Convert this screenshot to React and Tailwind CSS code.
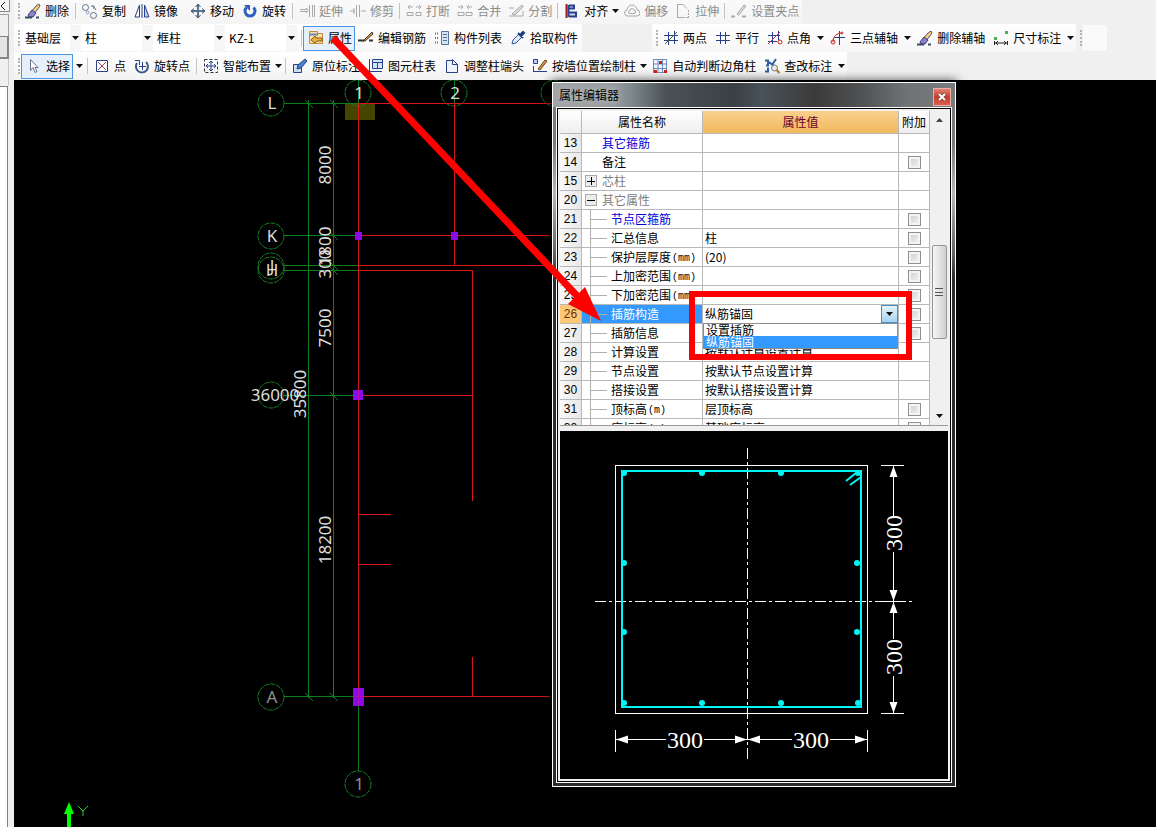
import React, { useState } from 'react';

/* ---------- Icons ---------- */

const NAVY = '#27408b';
const GRAY = '#a9a9a9';

const icons = {
    erase: (
        <>
            <path d="M6 9l5-6 3-2 1 2-6 8z" fill="#f3d36b" stroke="#5b4a8a" />
            <path d="M3 12l4-5 4 3-3 4H4z" fill="#8c84c8" stroke="#3b3a77" />
            <path d="M0 14.5h7M11 14.5h3" stroke="#3d4a66" strokeWidth="2" />
        </>
    ),
    copy: (
        <>
            <circle cx="3.5" cy="4.5" r="3" stroke="#5c7390" />
            <circle cx="11.5" cy="12.5" r="3" stroke="#5c7390" />
            <circle cx="5.5" cy="9.5" r="1.5" stroke="#8a9bb0" />
            <path d="M9 3h3v3M11 3l3 4" stroke="#5c7390" />
        </>
    ),
    mirror: (
        <>
            <path d="M5.5 2v12H1z" stroke={NAVY} fill="#fff" />
            <path d="M10.5 2v12H15z" stroke={NAVY} fill="#b9cdf0" />
            <path d="M8 1v14" stroke={NAVY} />
        </>
    ),
    move: (
        <>
            <path d="M8 2v12M2 8h12" stroke="#5a7090" strokeWidth="2" />
            <path d="M5.5 4L8 1l2.5 3M5.5 12L8 15l2.5-3M4 5.5L1 8l3 2.5M12 5.5L15 8l-3 2.5" stroke="#3a5070" />
        </>
    ),
    rotate: (
        <>
            <path d="M4.5 4.5a5 5 0 1 0 7 0" stroke="#2f5fc4" strokeWidth="3" />
            <path d="M2 2h6v6z" fill="#2f5fc4" />
        </>
    ),
    extend: <path d="M1 6.5h7M1 8.5h7M10.5 2v12M13.5 2v12M15.5 2v12M7 5l2 2.5L7 10" stroke={GRAY} />,
    trim: <path d="M0 8h5M11 8h5M6.5 2v12M9.5 2v12M4 5v6" stroke={GRAY} />,
    breakLine: <path d="M2 4h5M10 4h5M4 2L2 4l2 2M13 2l2 2-2 2M1 9.5h6v3H1zM10 9.5h5v3h-5z" stroke={GRAY} />,
    merge: <path d="M1 4h5M10 4h5M4 2l2 2-2 2M12 2l-2 2 2 2M1 9.5h6v3H1zM9 9.5h6v3H9z" stroke={GRAY} />,
    split: (
        <>
            <path d="M1 5h5M1 13h14V8" stroke={GRAY} />
            <path d="M4 11L14 2l1 2-8 8z" stroke={GRAY} fill="#ddd" />
        </>
    ),
    align: (
        <>
            <path d="M2.5 1v14" stroke="#a02020" strokeWidth="2" />
            <path d="M5 2.5h5v3H5M5 9.5h7v4H5M4.5 2v12" stroke={NAVY} strokeWidth="2" fill="#c4d2ee" />
        </>
    ),
    offset: (
        <>
            <path d="M4 13a3 3 0 0 1-1-6 5 5 0 0 1 10 0 3 3 0 0 1 0 6z" stroke={GRAY} />
            <path d="M6 10.5a1.5 1.5 0 0 1 0-3 2 2 0 0 1 4 0 1.5 1.5 0 0 1 0 3z" stroke={GRAY} />
        </>
    ),
    stretch: (
        <>
            <path d="M2.5 2v12M2 1.5h6l4 4M2 14.5h6" stroke={GRAY} />
            <path d="M13.5 7v8M8 14.5h5" stroke={GRAY} strokeDasharray="2 1" />
        </>
    ),
    grip: (
        <>
            <path d="M0 13.5h4M11 13.5h4" stroke={GRAY} strokeWidth="2" />
            <path d="M6 11l7-9 2 1-7 9z" stroke={GRAY} fill="#ddd" />
        </>
    ),
    property: (
        <>
            <path d="M1.5 1.5h8v2h5v10h-13z" fill="#fbe0a2" stroke="#c98a34" />
            <path d="M2 4.5h8" stroke="#6c86b8" strokeWidth="2" />
            <path d="M3 10l4-4 1 2h6v3H9l-2 2z" fill="#f2b13e" stroke="#7a5a20" />
        </>
    ),
    editBar: (
        <>
            <path d="M0 10.5h6M11 10.5h4" stroke="#333" strokeWidth="2" />
            <path d="M5 11L14 2l1 2-8 7z" fill="#c79a55" stroke="#4c3515" />
        </>
    ),
    list: (
        <>
            <path d="M7.5 1.5h7v13h-7z" fill="#d5e3f7" stroke="#56719a" />
            <path d="M9 4.5h4M9 7.5h4M9 10.5h4" stroke="#56719a" />
            <path d="M1 3.5h4M1 8h4M1 12.5h4" stroke="#56719a" strokeDasharray="1 1" strokeWidth="2" />
        </>
    ),
    picker: (
        <>
            <path d="M2 14l1-4 6-6 3 3-6 6z" fill="#dfeaff" stroke="#315a9c" />
            <path d="M8 3l5 5M10 5l3-3 1 1-3 3z" fill="#315a9c" stroke="#1d3f7c" strokeWidth="2" />
        </>
    ),
    select: <path d="M4.5 1.5v11l2.5-3 2 5 2-1-2-4h3z" fill="#fff" stroke="#6b7785" />,
    point: (
        <>
            <path d="M2.5 2.5h11v11h-11z" fill="#fff" stroke={NAVY} />
            <path d="M4 4l8 8M12 4l-8 8" stroke="#a23a6a" />
        </>
    ),
    rotatePoint: (
        <>
            <path d="M3 5a6 6 0 1 0 9-1" stroke="#3c5a8c" strokeWidth="2" />
            <path d="M1 2.5h4.5V7M8.5 4v8M5 8.5h7" stroke={NAVY} />
        </>
    ),
    smart: (
        <>
            <path d="M1.5 1.5h13v13h-13z" stroke="#333" strokeDasharray="3 2" />
            <path d="M8 3v10M3 8h10M6 5l2-2 2 2M6 11l2 2 2-2M5 6L3 8l2 2M11 6l2 2-2 2" stroke={NAVY} />
        </>
    ),
    origin: (
        <>
            <path d="M1.5 6.5h8v8h-8z" fill="#cfdef5" stroke={NAVY} />
            <path d="M5 11l1-4 7-6 2 2-6 7z" fill="#4b7fd1" stroke="#23427f" />
        </>
    ),
    table: (
        <>
            <path d="M4.5 1.5h10v9h-10z" fill="#d5e3f7" stroke={NAVY} />
            <path d="M4.5 4.5h10M9.5 4v6M1.5 1v13M1 13.5h13" stroke={NAVY} />
        </>
    ),
    adjust: <path d="M2.5 14.5v-12h6v-1l5 5v8zM8.5 2.5v4h5" stroke={NAVY} fill="#eef3fb" />,
    wall: (
        <>
            <path d="M1.5 1.5h4v4h-4zM1.5 8v6M1 13.5h14" stroke={NAVY} fill="#c4d2ee" />
            <path d="M6 11l7-9 2 1-7 9z" fill="#d49a4a" stroke="#6e4718" />
        </>
    ),
    corner: (
        <>
            <path d="M1.5 1.5h13v13h-13zM1 6h14M1 10.5h14M6 1v14M10.5 1v14" stroke="#6d8db5" fill="#eef6ff" />
            <path d="M7 3h3v3H7zM2 12h3v3H2zM12 12h3v3h-3z" fill="#d02020" />
        </>
    ),
    check: (
        <>
            <path d="M1 2.5h3v5H2M1 13.5h3v-4M5 4l6 5M12 1L8 7" stroke="#2f5f9f" strokeWidth="2" />
            <circle cx="10.5" cy="10" r="3" fill="#e8eef5" stroke="#777" />
            <path d="M12.5 12l3 3" stroke="#b5782e" strokeWidth="2" />
        </>
    ),
    twoPoint: (
        <>
            <path d="M5.5 2v13M11.5 1v13M1 5.5h14M1 10.5h14" stroke={NAVY} />
            <path d="M2 14L14 2" stroke="#4d6a2a" />
        </>
    ),
    parallel: <path d="M5.5 2v12M10.5 2v12M1 5.5h14M1 10.5h14" stroke={NAVY} />,
    angle: (
        <>
            <path d="M5.5 2v12M11.5 1v9M1 5.5h12M1 11.5h9" stroke={NAVY} />
            <path d="M1 14L13 2" stroke="#c03040" />
            <circle cx="13" cy="12" r="2" stroke="#d02020" />
        </>
    ),
    threePoint: (
        <>
            <path d="M9.5 1v14M4 7.5h11" stroke={NAVY} />
            <path d="M3 12c0-6 4-9 9-9" stroke="#d02020" />
            <circle cx="3" cy="12" r="2" stroke="#d02020" />
            <circle cx="12" cy="3" r="1" stroke="#d02020" />
        </>
    ),
    dimension: (
        <>
            <path d="M1 7h3v3H1zM12 1h3v3h-3z" fill="#4caf50" />
            <path d="M1.5 11v4M14.5 11v4M2 13h12M5 11l-2 2 2 2M11 11l2 2-2 2" stroke="#222" />
        </>
    ),
};

const Icon = ({ name }) => (
    <svg className="size-4 shrink-0" viewBox="0 0 16 16" fill="none" aria-hidden="true">
        {icons[name]}
    </svg>
);

/* ---------- Toolbar parts ---------- */

const Caret = () => (
    <svg className="h-1 w-[7px] shrink-0" viewBox="0 0 7 4" aria-hidden="true">
        <path d="M0 0h7L3.5 4z" fill="#111" />
    </svg>
);

const Handle = () => <span className="ml-1 mr-px h-4 w-0 shrink-0 border-l-2 border-dotted border-[#b4b4b4]" />;

const Separator = () => <span className="mx-0.5 h-4 w-px shrink-0 bg-[#c4c4c4]" />;

const Tool = ({ icon, label, disabled, active }) => (
    <button
        type="button"
        disabled={disabled}
        className={`flex h-[23px] shrink-0 items-center gap-1 whitespace-nowrap pl-1 ${
            disabled ? 'pr-[3px] text-[#8c8c8c]' : 'text-black'
        } ${active ? 'bg-[#e6f0fb] pr-0.5 outline outline-[#4a96e0]' : ''} ${!disabled && !active ? 'pr-1' : ''}`}
    >
        <Icon name={icon} />
        {label}
    </button>
);

const DropButton = ({ label, wide }) => (
    <button
        type="button"
        aria-label={label}
        className={`flex h-[23px] shrink-0 items-center ${wide ? 'w-[11px] justify-center' : 'w-2'}`}
    >
        <Caret />
    </button>
);

const Combo = ({ label, value, className }) => (
    <div className={`relative flex h-[26px] shrink-0 items-center bg-white ${className}`}>
        <select
            aria-label={label}
            defaultValue={value}
            className="h-full w-full appearance-none bg-transparent pl-1 text-black outline-none"
        >
            <option>{value}</option>
        </select>
        <span className="pointer-events-none absolute inset-y-0 right-0 flex w-[11px] items-center justify-center bg-[#f6f6f6]">
            <Caret />
        </span>
    </div>
);

const Toolbars = () => (
    <div className="overflow-hidden bg-[#f0f0f0] text-xs">
        {/* Edit */}
        <div className="flex h-6">
            <div className="flex items-center bg-gradient-to-b from-[#fafafa] to-[#f4f4f4] pb-0.5">
                <Handle />
                <Tool icon="erase" label="删除" />
                <Separator />
                <Tool icon="copy" label="复制" />
                <Tool icon="mirror" label="镜像" />
                <span className="w-1" />
                <Tool icon="move" label="移动" />
                <Tool icon="rotate" label="旋转" />
                <Separator />
                <Tool icon="extend" label="延伸" disabled />
                <Tool icon="trim" label="修剪" disabled />
                <Separator />
                <Tool icon="breakLine" label="打断" disabled />
                <Tool icon="merge" label="合并" disabled />
                <Tool icon="split" label="分割" disabled />
                <Separator />
                <Tool icon="align" label="对齐" />
                <DropButton label="对齐选项" />
                <Tool icon="offset" label="偏移" disabled />
                <Tool icon="stretch" label="拉伸" disabled />
                <Separator />
                <Tool icon="grip" label="设置夹点" disabled />
            </div>
        </div>

        {/* Component and axis */}
        <div className="flex h-7">
            <div className="flex items-center bg-gradient-to-b from-white to-[#f6f6f6]">
                <Handle />
                <Combo label="楼层" value="基础层" className="w-[60px]" />
                <Combo label="构件类型" value="柱" className="w-[72px]" />
                <Combo label="构件类别" value="框柱" className="w-[72px]" />
                <Combo label="构件名称" value="KZ-1" className="w-[72px]" />
                <span className="w-0.5" />
                <Separator />
                <Tool icon="property" label="属性" active />
                <Tool icon="editBar" label="编辑钢筋" />
                <Tool icon="list" label="构件列表" />
                <Tool icon="picker" label="拾取构件" />
            </div>
            <div className="ml-[70px] flex items-center bg-gradient-to-b from-white to-[#f6f6f6]">
                <Handle />
                <Tool icon="twoPoint" label="两点" />
                <Tool icon="parallel" label="平行" />
                <Tool icon="angle" label="点角" />
                <DropButton label="点角选项" wide />
                <Tool icon="threePoint" label="三点辅轴" />
                <DropButton label="三点辅轴选项" wide />
                <Tool icon="erase" label="删除辅轴" />
                <Tool icon="dimension" label="尺寸标注" />
                <DropButton label="尺寸标注选项" wide />
            </div>
            <div className="flex items-center">
                <Handle />
                <span className="h-[26px] w-6 bg-[#fafafa]" />
            </div>
        </div>

        {/* Drawing */}
        <div className="flex h-7">
            <div className="flex items-center bg-gradient-to-b from-white to-[#f2f2f2]">
                <Handle />
                <span className="w-px" />
                <Tool icon="select" label="选择" active />
                <span className="w-0.5" />
                <DropButton label="选择选项" wide />
                <Separator />
                <Tool icon="point" label="点" />
                <Tool icon="rotatePoint" label="旋转点" />
                <Separator />
                <Tool icon="smart" label="智能布置" />
                <DropButton label="智能布置选项" />
                <Separator />
                <Tool icon="origin" label="原位标注" />
                <Tool icon="table" label="图元柱表" />
                <Tool icon="adjust" label="调整柱端头" />
                <Tool icon="wall" label="按墙位置绘制柱" />
                <DropButton label="绘制柱选项" />
                <Tool icon="corner" label="自动判断边角柱" />
                <Tool icon="check" label="查改标注" />
                <DropButton label="查改标注选项" wide />
            </div>
        </div>
    </div>
);

/* ---------- Axis grid drawing ---------- */

const bubbles = [
    { x: 257, y: 23, label: 'L' },
    { x: 257, y: 156, label: 'K' },
    { x: 257, y: 186, label: 'J' },
    { x: 257, y: 190, label: 'H' },
    { x: 257, y: 315, label: '' },
    { x: 257, y: 617, label: 'A', dim: true },
    { x: 344, y: 13, label: '1' },
    { x: 440, y: 13, label: '2' },
    { x: 540, y: 13, label: '' },
    { x: 344, y: 704, label: '1', dim: true },
];

const dimensions = [
    { x: 311, y: 85, text: '8000' },
    { x: 311, y: 166, text: '1800' },
    { x: 311, y: 184, text: '300' },
    { x: 311, y: 248, text: '7500' },
    { x: 311, y: 460, text: '18200' },
    { x: 286, y: 314, text: '35800' },
];

const ticks = [
    [294, 23], [319, 23], [319, 155], [319, 185], [319, 190], [319, 315], [294, 616], [319, 616],
];

const GridDrawing = () => (
    <svg className="absolute inset-0 h-full w-full bg-black" fill="none" role="img" aria-label="轴网">
        <path d="M331 23h30v17h-30z" fill="#454500" />
        <g stroke="#0c7f1c" shapeRendering="crispEdges">
            <path d="M270 23.5h74M270 155.5h74M270 185.5h74M270 190.5h74M270 315.5h74M270 616.5h74" />
            <path d="M294.5 20v598M319.5 20v598M344.5 617v74" />
        </g>
        {ticks.map(([x, y]) => (
            <path key={`${x}-${y}`} d={`M${x - 3} ${y - 3}l8 8`} stroke="#0c7f1c" />
        ))}
        {bubbles.map(({ x, y }) => (
            <circle key={`${x}-${y}`} cx={x} cy={y} r="13" stroke="#167f26" strokeDasharray="5 1" />
        ))}
        <g stroke="#d8141c" shapeRendering="crispEdges">
            <path d="M344.5 23v594M440.5 23v162M344 23.5h194M344 155.5h192M344 185.5h192" />
            <path d="M344 190.5h115M458.5 190v231M344 315.5h115M344 434.5h33M344 484.5h33M344 616.5h192M458.5 577v39" />
        </g>
        <path d="M344.5 0v23M440.5 0v23" stroke="#0c7f1c" />
        <path d="M341 152h7v8h-7zM437 152h7v8h-7zM339 310h10v10h-10zM339 608h11v18h-11z" fill="#8a0be8" />
        <path d="M344.5 608v18M339 616.5h11M344.5 310v10" stroke="#b010b8" />

        <g fontFamily="'Noto Sans', sans-serif" fontSize="17" textAnchor="middle" fill="#dcdcdc">
            {bubbles.map(({ x, y, label, dim }) => (
                <text key={`${x}-${y}`} x={x + 1} y={y + 6} fill={dim ? '#8f8f8f' : '#dcdcdc'}>
                    {label}
                </text>
            ))}
            {dimensions.map(({ x, y, text }) => (
                <text key={text} x={x} y={y} dy="6" transform={`rotate(-90 ${x} ${y})`}>
                    {text}
                </text>
            ))}
            <text x="261" y="321">36000</text>
        </g>

        {/* Y axis marker */}
        <path d="M55 722l5 12h-3v20h-4v-20h-3z" fill="#00ff00" />
        <path d="M64 726l5 5 5-5M69 731v5" stroke="#20d030" />
    </svg>
);

/* ---------- Column section drawing ---------- */

const rebars = [
    [64, 42], [142, 42], [221, 42], [298, 42],
    [64, 132], [297, 132], [64, 201], [297, 201],
    [64, 272], [142, 272], [221, 272], [298, 272],
];

const SectionDrawing = () => (
    <svg className="block h-[348px] w-full bg-black" fill="none" role="img" aria-label="柱截面">
        <g stroke="#fff" shapeRendering="crispEdges">
            <path d="M55.5 34.5h252v248h-252z" />
            <path d="M187.5 17v314M35 170.5h317" strokeDasharray="11 3 3 3" />
            <path d="M321 34.5h23M321 282.5h23M333.5 34v51M333.5 121v87M333.5 245v38M320 170.5h24" />
            <path d="M55.5 299v22M307.5 299v22M56 308.5h50M144 308.5h88M270 308.5h38" />
        </g>
        <path d="M62 40h239v236H62z" stroke="#00f5f5" strokeWidth="2" />
        <path d="M286 50l10-8M290 54l11-8" stroke="#00f5f5" strokeWidth="2" />
        {rebars.map(([x, y]) => (
            <circle key={`${x}-${y}`} cx={x} cy={y} r="3" fill="#00f5f5" />
        ))}
        <g fill="#fff">
            <path d="M333.5 35l4 11h-8zM333.5 170l4-11h-8zM333.5 171l4 11h-8zM333.5 282l4-11h-8z" />
            <path d="M56 308.5l12-4v8zM187 308.5l-12-4v8zM188 308.5l12-4v8zM307 308.5l-12-4v8z" />
        </g>
        <g fontFamily="'Liberation Serif', serif" fontSize="24" textAnchor="middle" fill="#fff">
            <text x="125" y="317">300</text>
            <text x="251" y="317">300</text>
            <text x="342" y="102" transform="rotate(-90 342 102)">300</text>
            <text x="342" y="226" transform="rotate(-90 342 226)">300</text>
        </g>
    </svg>
);

/* ---------- Property editor ---------- */

const rows = [
    { no: 13, name: '其它箍筋', tone: 'blue' },
    { no: 14, name: '备注', extra: true },
    { no: 15, name: '芯柱', tone: 'gray', toggle: 'plus' },
    { no: 20, name: '其它属性', tone: 'gray', toggle: 'minus' },
    { no: 21, name: '节点区箍筋', tone: 'blue', child: true, extra: true },
    { no: 22, name: '汇总信息', child: true, value: '柱', extra: true },
    { no: 23, name: '保护层厚度', unit: '(mm)', child: true, value: '(20)', extra: true },
    { no: 24, name: '上加密范围', unit: '(mm)', child: true, extra: true },
    { no: 25, name: '下加密范围', unit: '(mm)', child: true, extra: true },
    { no: 26, name: '插筋构造', child: true, selected: true, extra: true },
    { no: 27, name: '插筋信息', child: true, extra: true },
    { no: 28, name: '计算设置', child: true, value: '按默认计算设置计算' },
    { no: 29, name: '节点设置', child: true, value: '按默认节点设置计算' },
    { no: 30, name: '搭接设置', child: true, value: '按默认搭接设置计算' },
    { no: 31, name: '顶标高', unit: '(m)', child: true, value: '层顶标高', extra: true },
    { no: 32, name: '底标高', unit: '(m)', child: true, value: '基础底标高', extra: true },
];

const tones = { blue: 'text-[#0000d8]', gray: 'text-[#808080]' };

const NameCell = ({ row }) => (
    <div className={`flex h-[18px] items-center overflow-hidden whitespace-nowrap ${tones[row.tone] || ''}`}>
        {row.child && (
            <>
                <span className="ml-2 h-full w-px shrink-0 bg-[#b0b0b0]" />
                <span className="mr-1 h-px w-4 shrink-0 bg-[#b0b0b0]" />
            </>
        )}
        {row.toggle && (
            <button
                type="button"
                aria-label={row.toggle === 'plus' ? '展开' : '折叠'}
                className="ml-[3px] mr-[5px] flex size-3 shrink-0 items-center justify-center border border-[#a8a8a8] bg-[#ececec]"
            >
                <svg className="size-2" viewBox="0 0 8 8" stroke="#000" shapeRendering="crispEdges">
                    <path d={row.toggle === 'plus' ? 'M0 4.5h8M4.5 0v8' : 'M0 4.5h8'} />
                </svg>
            </button>
        )}
        <span className={row.child || row.toggle ? '' : 'ml-5'}>{row.name}</span>
        {row.unit && (
            <span className="ml-px pt-1 font-['Liberation_Mono',monospace] text-[10px] leading-3">{row.unit}</span>
        )}
    </div>
);

const AnchorSelect = () => {
    const [value, setValue] = useState('纵筋锚固');
    const options = ['设置插筋', '纵筋锚固'];

    return (
        <div className="relative h-[18px] bg-white">
            <select
                aria-label="插筋构造"
                value={value}
                onChange={(e) => setValue(e.target.value)}
                className="block h-[18px] w-full appearance-none pl-0.5 leading-[18px] outline-none"
            >
                {options.map((option) => (
                    <option key={option}>{option}</option>
                ))}
            </select>
            <span className="pointer-events-none absolute inset-y-0 right-0 flex w-[17px] items-center justify-center border border-[#4a90c8] bg-gradient-to-b from-[#e4f3fc] to-[#a5d3f0]">
                <Caret />
            </span>
            <ul
                role="listbox"
                aria-label="插筋构造选项"
                className="absolute inset-x-0 top-[18px] z-10 border border-[#8c8c8c] bg-white leading-3"
            >
                {options.map((option) => (
                    <li
                        key={option}
                        role="option"
                        aria-selected={option === value}
                        className={`h-3 pl-0.5 ${option === value ? 'bg-[#3399ff] text-white' : ''}`}
                    >
                        {option}
                    </li>
                ))}
            </ul>
        </div>
    );
};

const cell = 'h-[19px] border-b border-r border-[#b8b8b8] p-0 font-normal';

const PropertyTable = () => (
    <table className="w-full table-fixed border-separate border-spacing-0 bg-white text-xs leading-[18px] text-black">
        <colgroup>
            <col className="w-[22px]" />
            <col className="w-[121px]" />
            <col />
            <col className="w-[31px]" />
        </colgroup>
        <thead>
            <tr className="bg-gradient-to-b from-white to-[#ededed]">
                <th className="h-[23px] border-b border-r border-[#b8b8b8] p-0" aria-label="序号" />
                <th className="border-b border-r border-[#b8b8b8] p-0 font-normal">属性名称</th>
                <th className="border-b border-r border-[#b8b8b8] bg-gradient-to-b from-[#f8d08c] to-[#f2b95c] p-0 font-normal text-[#6a0030]">
                    属性值
                </th>
                <th className="border-b border-r border-[#b8b8b8] p-0 font-normal">附加</th>
            </tr>
        </thead>
        <tbody>
            {rows.map((row) => (
                <tr key={row.no}>
                    <th
                        scope="row"
                        className={`${cell} font-['Liberation_Sans',sans-serif] ${
                            row.selected
                                ? 'bg-[#fcc878] text-[#6a3000]'
                                : 'bg-gradient-to-r from-[#fafafa] to-[#e8e8e8]'
                        }`}
                    >
                        {row.no}
                    </th>
                    <td className={`${cell} ${row.selected ? 'bg-[#3399ff] text-white' : ''}`}>
                        <NameCell row={row} />
                    </td>
                    <td className={cell}>
                        {row.selected ? (
                            <AnchorSelect />
                        ) : (
                            <div className="h-[18px] overflow-hidden whitespace-nowrap pl-0.5">{row.value}</div>
                        )}
                    </td>
                    <td className={cell}>
                        {row.extra && (
                            <input
                                type="checkbox"
                                aria-label={`${row.name} 附加`}
                                className="mx-auto block size-[13px] appearance-none border border-[#8e8f8f] bg-gradient-to-br from-[#c9ccd0] to-[#f6f6f6] shadow-[inset_0_0_0_2px_#f4f4f4]"
                            />
                        )}
                    </td>
                </tr>
            ))}
        </tbody>
    </table>
);

const ScrollBar = () => (
    <div className="flex w-[18px] shrink-0 flex-col items-center bg-[#f0f0f0]">
        <button type="button" aria-label="向上滚动" className="flex h-[18px] w-full items-center justify-center">
            <svg className="h-1 w-[7px]" viewBox="0 0 7 4">
                <path d="M0 4h7L3.5 0z" fill="#444" />
            </svg>
        </button>
        <div className="mt-[116px] flex h-[94px] w-[15px] items-center justify-center rounded-xs border border-[#979797] bg-gradient-to-r from-[#f7f7f7] to-[#cfcfcf]">
            <span className="h-2 w-2 border-y border-[#555] bg-[linear-gradient(#555,#555)] bg-[length:100%_1px] bg-center bg-no-repeat" />
        </div>
        <button type="button" aria-label="向下滚动" className="mt-auto flex h-[18px] w-full items-center justify-center">
            <Caret />
        </button>
    </div>
);

const PropertyEditor = () => (
    <section
        aria-label="属性编辑器"
        className="absolute left-[538px] top-0.5 w-[404px] border border-white bg-[linear-gradient(#77797c,#77797c_60px,#b4b6b8_110px,#606266_170px,#2b2c30_195px)] px-[3px] pb-[3px] shadow-[0_0_10px_1px_rgba(0,0,0,0.75)]"
    >
        <header className="-mx-[3px] flex h-6 items-center justify-between bg-[linear-gradient(90deg,#a0a4a7,#989c9f_15%,#7c8588_20%,#4a5256_28%,#3a4044_45%,#48525a_52%,#3c3a39_65%,#4e5052_76%,#6f7375_88%,#787c7f)] pl-1.5 pr-1">
            <h2 className="text-xs text-black [text-shadow:0_0_6px_#c8cccf]">属性编辑器</h2>
            <button
                type="button"
                aria-label="关闭"
                className="mt-1 flex h-[18px] w-[18px] items-center justify-center border border-[#e8b0a8] bg-gradient-to-b from-[#e08070] via-[#c83a28] to-[#d86050]"
            >
                <svg className="size-2" viewBox="0 0 8 8">
                    <path d="M1 1l6 6M7 1L1 7" stroke="#444" strokeWidth="3" />
                    <path d="M1 1l6 6M7 1L1 7" stroke="#fff" strokeWidth="2" />
                </svg>
            </button>
        </header>
        <div className="border border-white">
            <div className="border border-black bg-[#f0f0f0] p-0.5">
                <div className="flex h-[315px] overflow-hidden border-b border-[#9a9a9a]">
                    <div className="min-w-0 flex-1 overflow-hidden">
                        <PropertyTable />
                    </div>
                    <ScrollBar />
                </div>
                <div className="mt-[5px]">
                    <SectionDrawing />
                </div>
            </div>
        </div>
    </section>
);

/* ---------- Side strip ---------- */

const SideStrip = () => (
    <aside className="flex w-3.5 shrink-0 flex-col bg-[#f0f0f0]">
        <button type="button" aria-label="收起" className="flex h-3 w-2.5 items-center border-b border-r border-[#8c8c8c] bg-[#f4f4f4]">
            <svg className="h-2 w-1.5" viewBox="0 0 6 8" fill="none">
                <path d="M5 0L1 4l4 4" stroke="#222" />
            </svg>
        </button>
        <div className="mt-0.5 h-[22px] w-[9px] border-r border-t border-[#a0a0a0]" />
        <div className="h-[23px] w-[9px] border-b-2 border-r-2 border-t border-[#858585] bg-[#e4e4e4]" />
        <div className="h-[27px] w-[9px] border-r border-[#c8c8c8]" />
        <div className="w-2 flex-1 border-r border-t border-[#808080] bg-white" />
    </aside>
);

const App = () => (
    <div className="relative flex min-h-screen overflow-hidden font-['Noto_Sans_CJK_SC',sans-serif]">
        <SideStrip />
        <div className="flex min-w-0 flex-1 flex-col">
            <Toolbars />
            <main className="relative min-h-[720px] flex-1">
                <GridDrawing />
                <PropertyEditor />
            </main>
        </div>

        {/* Callout from the 属性 button to the 插筋构造 row */}
        <svg className="pointer-events-none absolute inset-0 z-20 h-full w-full" fill="none" aria-hidden="true">
            <path d="M333 38l247 261" stroke="#ff0000" strokeWidth="7" />
            <path d="M601 321l-33-17 17-17z" fill="#ff0000" />
            <path d="M692 294h217v63H692z" stroke="#ff0000" strokeWidth="6" />
        </svg>
    </div>
);

export default App;
